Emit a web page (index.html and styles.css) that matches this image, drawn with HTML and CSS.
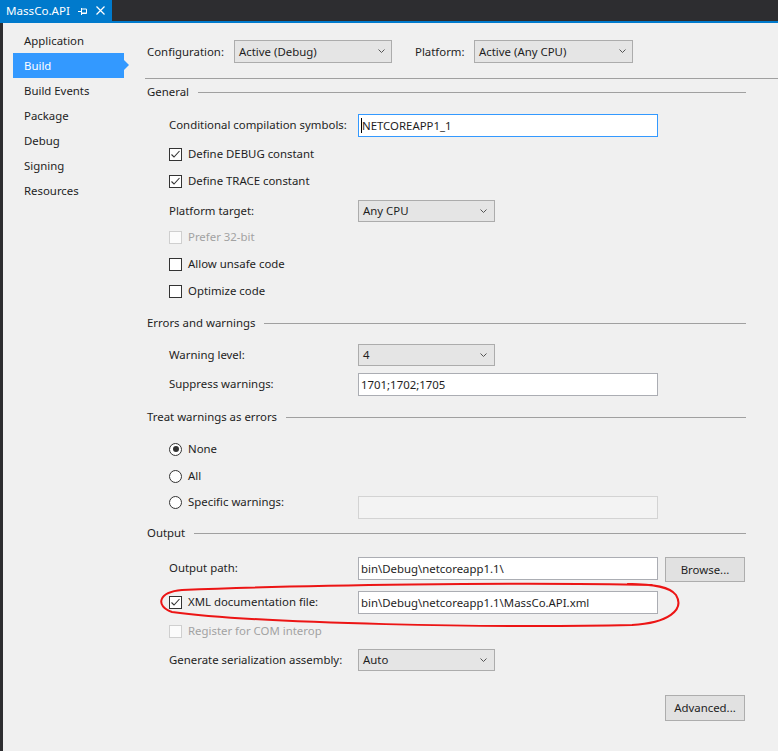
FILE: index.html
```html
<!DOCTYPE html>
<html lang="en">
<head>
<meta charset="utf-8">
<title>MassCo.API - Build</title>
<link rel="stylesheet" href="styles.css">
</head>
<body>
<div class="tabbar">
  <div class="tab">
    <span class="tab-title">MassCo.API</span>
    <svg class="tab-pin" width="10" height="8" viewBox="0 0 10 8"><path d="M0 4.5H3.5M3.5 1V8M3.5 2H8.5V6.5H3.5M3.5 6H8.5" fill="none" stroke="#fff" stroke-width="1"/></svg>
    <svg class="tab-close" width="9" height="9" viewBox="0 0 9 9"><path d="M0.5 0.5L8.5 8.5M8.5 0.5L0.5 8.5" fill="none" stroke="#fff" stroke-width="1.2"/></svg>
  </div>
</div>
<div class="tabline"></div>
<div class="main">
  <div class="strip"></div>
  <nav class="sidebar">
    <div class="nav-item">Application</div>
    <div class="nav-item active">Build</div>
    <div class="nav-item">Build Events</div>
    <div class="nav-item">Package</div>
    <div class="nav-item">Debug</div>
    <div class="nav-item">Signing</div>
    <div class="nav-item">Resources</div>
  </nav>
  <div class="content">
    <div class="config-row">
      <span class="config-label">Configuration:</span>
      <div class="select config-select"><span>Active (Debug)</span><svg class="chev" width="7" height="4" viewBox="0 0 7 4"><path d="M0.5 0.5L3.5 3.5L6.5 0.5" fill="none" stroke="#555"/></svg></div>
      <span class="platform-label">Platform:</span>
      <div class="select platform-select"><span>Active (Any CPU)</span><svg class="chev" width="7" height="4" viewBox="0 0 7 4"><path d="M0.5 0.5L3.5 3.5L6.5 0.5" fill="none" stroke="#555"/></svg></div>
    </div>
    <div class="hr"></div>

    <div class="section mt5"><span>General</span><div class="rule"></div></div>
    <div class="row h23 mt14">
      <span class="label">Conditional compilation symbols:</span>
      <div class="input focus"><span class="caret"></span>NETCOREAPP1_1</div>
    </div>
    <div class="row mt6">
      <span class="check"><svg width="11" height="11" viewBox="0 0 11 11"><path d="M1.5 5.5L4 8L9.5 2" fill="none" stroke="#333" stroke-width="1.1"/></svg></span>
      <span class="text">Define DEBUG constant</span>
    </div>
    <div class="row mt5">
      <span class="check"><svg width="11" height="11" viewBox="0 0 11 11"><path d="M1.5 5.5L4 8L9.5 2" fill="none" stroke="#333" stroke-width="1.1"/></svg></span>
      <span class="text">Define TRACE constant</span>
    </div>
    <div class="row mt8">
      <span class="label">Platform target:</span>
      <div class="select"><span>Any CPU</span><svg class="chev" width="7" height="4" viewBox="0 0 7 4"><path d="M0.5 0.5L3.5 3.5L6.5 0.5" fill="none" stroke="#555"/></svg></div>
    </div>
    <div class="row mt4 disabled">
      <span class="check"></span>
      <span class="text">Prefer 32-bit</span>
    </div>
    <div class="row mt5">
      <span class="check"></span>
      <span class="text">Allow unsafe code</span>
    </div>
    <div class="row mt5">
      <span class="check"></span>
      <span class="text">Optimize code</span>
    </div>

    <div class="section mt13"><span>Errors and warnings</span><div class="rule"></div></div>
    <div class="row mt13">
      <span class="label">Warning level:</span>
      <div class="select"><span>4</span><svg class="chev" width="7" height="4" viewBox="0 0 7 4"><path d="M0.5 0.5L3.5 3.5L6.5 0.5" fill="none" stroke="#555"/></svg></div>
    </div>
    <div class="row h23 mt7">
      <span class="label">Suppress warnings:</span>
      <div class="input">1701;1702;1705</div>
    </div>

    <div class="section mt13"><span>Treat warnings as errors</span><div class="rule"></div></div>
    <div class="row mt13">
      <span class="radio selected"></span>
      <span class="text">None</span>
    </div>
    <div class="row mt5">
      <span class="radio"></span>
      <span class="text">All</span>
    </div>
    <div class="row h23 mt9 top">
      <div class="label option">
        <span class="radio"></span>
        <span class="text">Specific warnings:</span>
      </div>
      <div class="input off"></div>
    </div>

    <div class="section mt6"><span>Output</span><div class="rule"></div></div>
    <div class="row h25 mt16 top">
      <span class="label tall">Output path:</span>
      <div class="input">bin\Debug\netcoreapp1.1\</div>
      <div class="btn browse">Browse...</div>
    </div>
    <div class="row h23 mt9">
      <div class="label option">
        <span class="check"><svg width="11" height="11" viewBox="0 0 11 11"><path d="M1.5 5.5L4 8L9.5 2" fill="none" stroke="#333" stroke-width="1.1"/></svg></span>
        <span class="text">XML documentation file:</span>
      </div>
      <div class="input">bin\Debug\netcoreapp1.1\MassCo.API.xml</div>
    </div>
    <div class="row mt6 disabled">
      <span class="check"></span>
      <span class="text">Register for COM interop</span>
    </div>
    <div class="row mt7">
      <span class="label">Generate serialization assembly:</span>
      <div class="select"><span>Auto</span><svg class="chev" width="7" height="4" viewBox="0 0 7 4"><path d="M0.5 0.5L3.5 3.5L6.5 0.5" fill="none" stroke="#555"/></svg></div>
    </div>
    <div class="actions mt24">
      <div class="btn advanced">Advanced...</div>
    </div>
  </div>
</div>
<svg class="annotation" width="778" height="751" viewBox="0 0 778 751">
  <path d="M652 585C520 582 300 585 182 590C158 592 155 606 172 612C260 624 500 628 632 625C668 623 685 610 676 595C670 587 655 584 628 584" fill="none" stroke="#ec1515" stroke-width="2" stroke-linecap="round"/>
</svg>
</body>
</html>
```

FILE: styles.css
```css
* { box-sizing: border-box; }

html, body {
  margin: 0;
  height: 100%;
}

body {
  background: #f0f0f0;
  color: #1e1e1e;
  font-family: "Noto Sans", "Open Sans", sans-serif;
  font-size: 11.4px;
  overflow: hidden;
  position: relative;
}

/* document tab */
.tabbar {
  height: 21px;
  background: #2d2d30;
  display: flex;
}

.tab {
  width: 112px;
  background: #007acc;
  color: #fff;
  display: flex;
  align-items: center;
  padding-left: 6px;
  font-size: 11.6px;
}

.tab-title { flex: 1; }

.tab-pin { margin-right: 8px; }

.tab-close { margin-right: 7px; }

.tabline {
  height: 2px;
  background: #007acc;
}

/* body */
.main {
  display: flex;
  height: 728px;
}

.strip {
  width: 3px;
  background: #2d2d30;
}

.sidebar {
  width: 137px;
  padding-top: 5px;
}

.nav-item {
  position: relative;
  height: 25px;
  line-height: 25px;
  width: 111px;
  margin-left: 10px;
  padding-left: 11px;
}

.nav-item.active {
  background: #3399ff;
  color: #fff;
}

.nav-item.active::after {
  content: "";
  position: absolute;
  right: -5px;
  top: 7px;
  border-left: 5px solid #3399ff;
  border-top: 5px solid transparent;
  border-bottom: 5px solid transparent;
}

.content {
  flex: 1;
  padding-left: 5px;
}

.config-row {
  margin-top: 17px;
  height: 23px;
  display: flex;
  align-items: center;
  padding-left: 2px;
}

.config-label { width: 87px; }

.platform-label {
  width: 59px;
  margin-left: 23px;
}

.hr {
  margin-top: 15px;
  height: 1px;
  background: #a0a0a0;
}

.section {
  height: 16px;
  display: flex;
  align-items: center;
  padding-left: 2px;
  padding-right: 32px;
}

.section > span { padding-bottom: 2px; }

.section .rule {
  flex: 1;
  height: 1px;
  margin-left: 9px;
  background: #a0a0a0;
}

.row {
  height: 22px;
  display: flex;
  align-items: center;
  padding-left: 24px;
}

.row.h23 { height: 23px; }
.row.h25 { height: 25px; }
.row.top { align-items: flex-start; }

.label {
  width: 189px;
  flex: none;
}

span.label,
.text { padding-bottom: 2px; }

.label.tall {
  height: 23px;
  line-height: 21px;
  padding-bottom: 0;
}

.option {
  display: flex;
  align-items: center;
  height: 13px;
}

.row.h23:not(.top) .option { height: 23px; }

.check {
  width: 13px;
  height: 13px;
  flex: none;
  margin-right: 6px;
  border: 1px solid #333;
  background: #fff;
  display: flex;
  align-items: center;
  justify-content: center;
}

.disabled { color: #a2a2a2; }

.disabled .check {
  border-color: #cfcfcf;
  background: #fbfbfb;
}

.radio {
  width: 13px;
  height: 13px;
  flex: none;
  margin-right: 6px;
  border: 1px solid #333;
  border-radius: 50%;
  background: #fff;
  display: flex;
  align-items: center;
  justify-content: center;
}

.radio.selected::after {
  content: "";
  width: 6px;
  height: 6px;
  border-radius: 50%;
  background: #333;
}

.input {
  width: 300px;
  height: 23px;
  flex: none;
  background: #fff;
  border: 1px solid #abadb3;
  padding-left: 2px;
  padding-bottom: 1px;
  display: flex;
  align-items: center;
}

.input.focus { border-color: #3399ff; }

.input.off {
  background: #f3f3f3;
  border-color: #d3d3d3;
}

.caret {
  width: 1px;
  height: 15px;
  background: #000;
}

.select {
  width: 137px;
  height: 22px;
  flex: none;
  background: #e5e5e5;
  border: 1px solid #acacac;
  display: flex;
  align-items: center;
  justify-content: space-between;
  padding: 0 7px 1px 4px;
}

.config-select { width: 158px; height: 23px; padding-right: 6px; }
.platform-select { width: 159px; height: 23px; padding-right: 6px; }

.btn {
  width: 80px;
  height: 25px;
  background: #e1e1e1;
  border: 1px solid #adadad;
  display: flex;
  align-items: center;
  justify-content: center;
  padding-bottom: 1px;
}

.browse { margin-left: 7px; }

.actions {
  display: flex;
  justify-content: flex-end;
  padding-right: 33px;
}

.advanced { height: 26px; }

.annotation {
  position: absolute;
  left: 0;
  top: 0;
  pointer-events: none;
}

.mt4 { margin-top: 4px; }
.mt5 { margin-top: 5px; }
.mt6 { margin-top: 6px; }
.mt7 { margin-top: 7px; }
.mt8 { margin-top: 8px; }
.mt9 { margin-top: 9px; }
.mt13 { margin-top: 13px; }
.mt14 { margin-top: 14px; }
.mt16 { margin-top: 16px; }
.mt24 { margin-top: 24px; }
```
